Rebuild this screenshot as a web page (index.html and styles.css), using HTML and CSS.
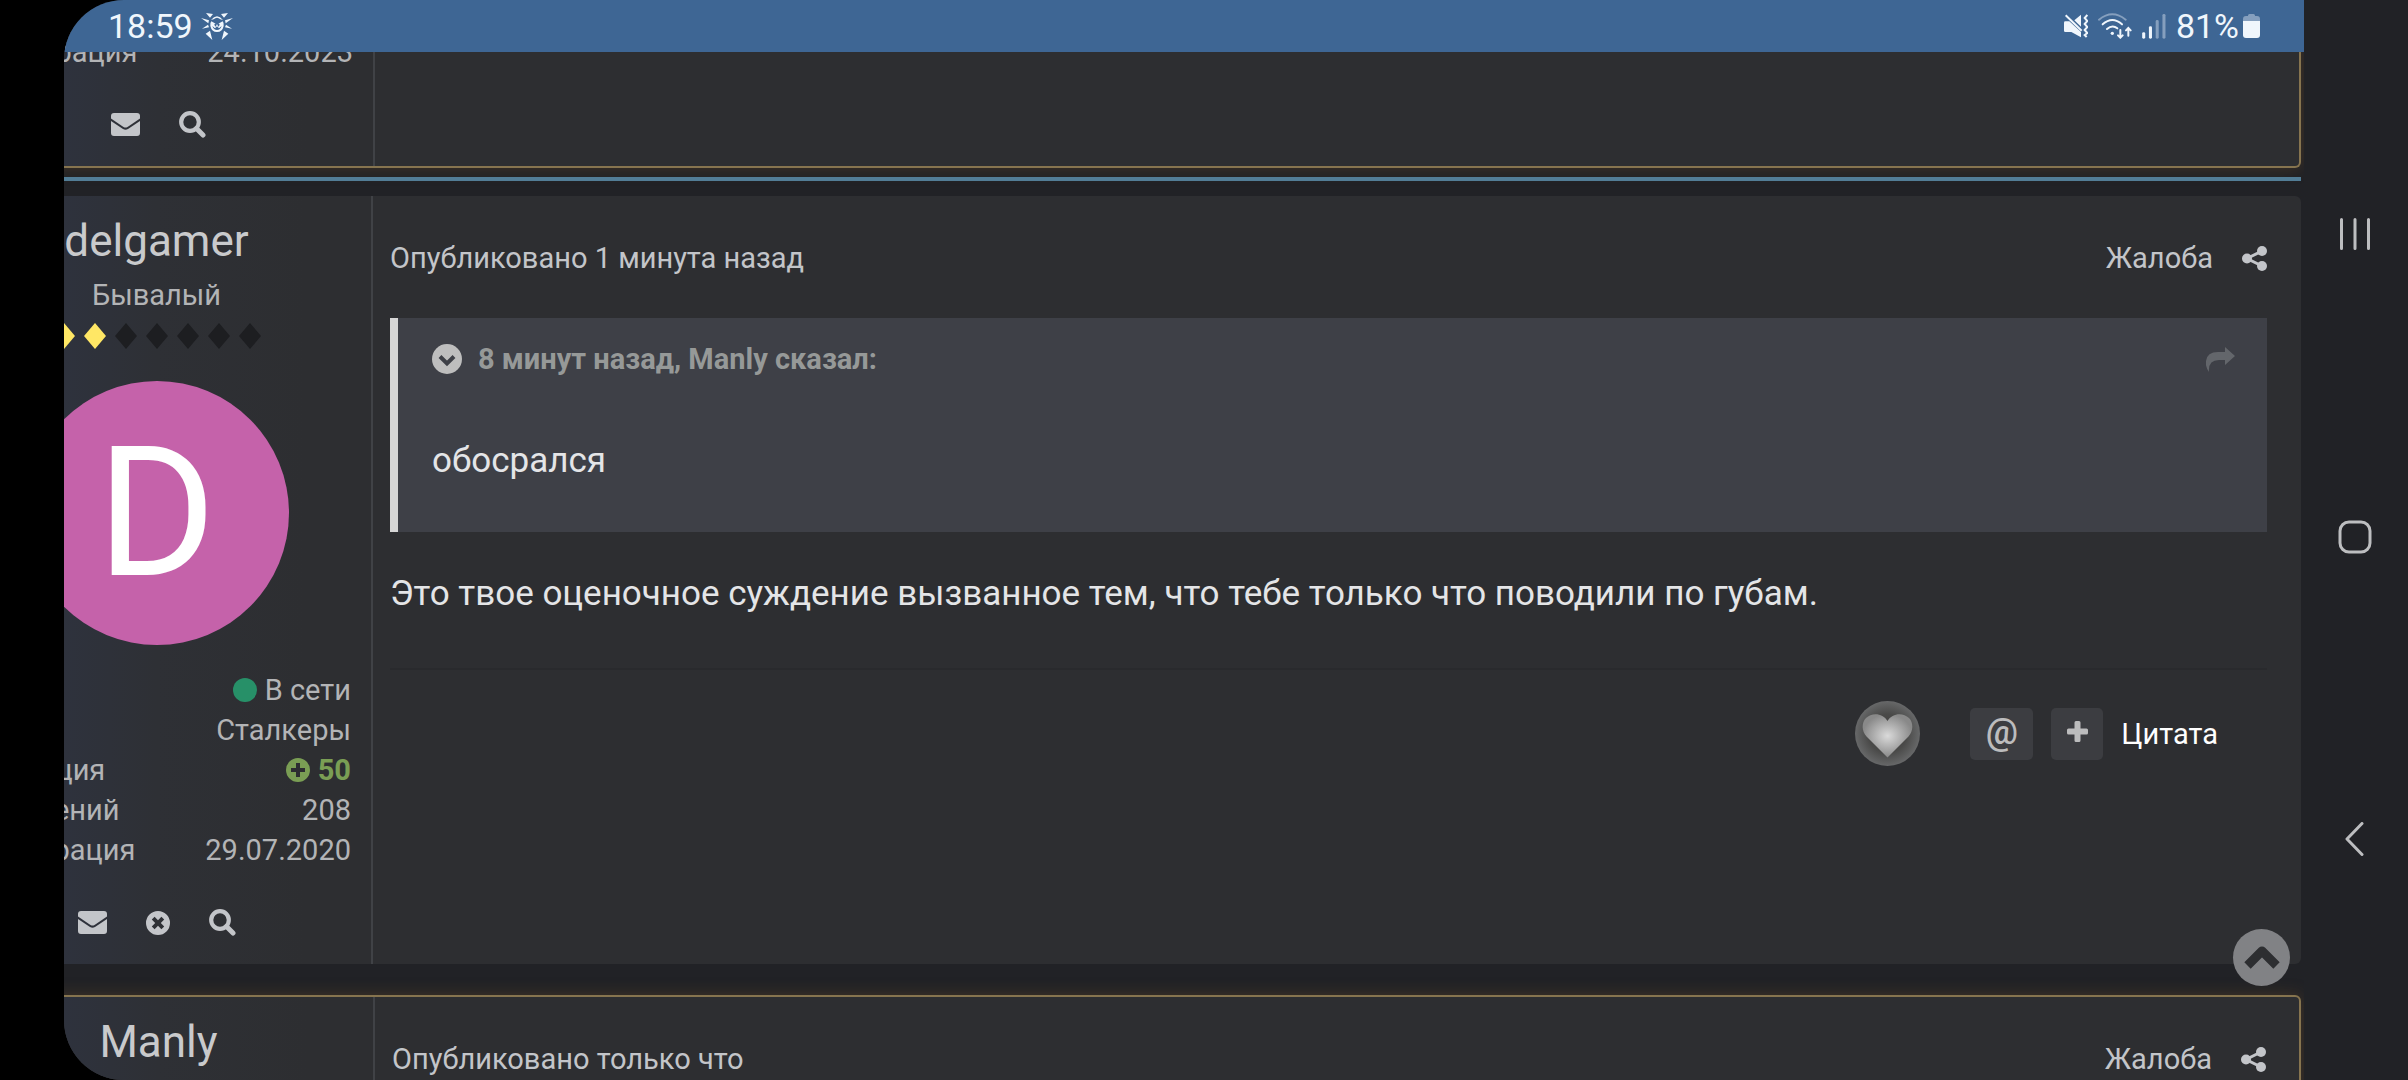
FILE: index.html
```html
<!DOCTYPE html>
<html lang="ru">
<head>
    <meta charset="UTF-8">
    <meta name="viewport" content="width=device-width, initial-scale=1.0">
    <title>Форум</title>
    <link rel="stylesheet" href="styles.css">
</head>
<body>
    <svg class="sprite" aria-hidden="true">
        <symbol id="i-mail" viewBox="0 0 29 23">
            <path d="M3 0h23a3 3 0 0 1 3 3v2.500L16.500 14a4 4 0 0 1-4 0L0 5.500V3a3 3 0 0 1 3-3z"/>
            <path d="M0 8l12 8a4.500 4.500 0 0 0 5 0l12-8v12a3 3 0 0 1-3 3H3a3 3 0 0 1-3-3z"/>
        </symbol>
        <symbol id="i-search" viewBox="0 0 27 27">
            <circle cx="11" cy="11" r="8.800" fill="none" stroke="currentColor" stroke-width="4.200"/>
            <path d="M17.500 17.500l6.500 6.500" fill="none" stroke="currentColor" stroke-width="5" stroke-linecap="round"/>
        </symbol>
        <symbol id="i-ban" viewBox="0 0 24 24">
            <path fill-rule="evenodd" d="M12 0a12 12 0 1 1 0 24a12 12 0 1 1 0-24zM8.600 5.800L5.800 8.600L9.200 12l-3.400 3.400l2.800 2.800L12 14.800l3.400 3.400l2.800-2.800L14.800 12l3.400-3.400l-2.800-2.800L12 9.200z"/>
        </symbol>
        <symbol id="i-share" viewBox="0 0 25 25">
            <path d="M20 5L5 12.500L20 20" fill="none" stroke="currentColor" stroke-width="3"/>
            <circle cx="5" cy="12.500" r="5"/><circle cx="20" cy="5" r="5"/><circle cx="20" cy="20" r="5"/>
        </symbol>
        <symbol id="i-diamond" viewBox="0 0 22 26">
            <path d="M11 0l11 13l-11 13L0 13z"/>
        </symbol>
    </svg>

    <div class="phone">
        <div class="screen">
            <header class="status-bar">
                <span class="clock">18:59</span>
                <svg class="spider" viewBox="0 0 96 84" aria-hidden="true">
                    <path d="M15 3L36 6L27 17zM0 18L24 25L22 34zM3 50L21 38L24 46zM14 65L27 56L34 84z"/>
                    <path d="M81 3L60 6L69 17zM96 18L72 25L74 34zM93 50L75 38L72 46zM82 65L69 56L62 84z"/>
                    <path d="M30 24Q48 2 66 24L58 22Q48 12 38 22z"/>
                    <path d="M31 28L44 35Q36 36 44 44L48 36L52 44Q60 36 52 35L65 28Q70 34 68 42Q64 60 48 60Q32 60 28 42Q26 34 31 28zM34 42Q38 54 48 54Q58 54 62 42L54 49L48 43L42 49z" fill-rule="evenodd"/>
                </svg>
                <div class="status-icons">
                    <svg class="mute" viewBox="0 0 72 72" aria-hidden="true">
                        <path d="M51 2v36L31 19zM4 22h12L51 54v16L22 54H4q-4 0-4-4V26q0-4 4-4z"/>
                        <path d="M5 4l48 46M70 3l-8 9l8 9l-8 9l8 9l-8 9l8 9l-8 6l6 6" fill="none" stroke="currentColor" stroke-width="6"/>
                    </svg>
                    <svg class="wifi" viewBox="0 0 102 78" aria-hidden="true">
                        <g fill="none" stroke="currentColor" stroke-width="6" stroke-linecap="round">
                            <path d="M3 20Q43-12 83 20" opacity=".4"/>
                            <path d="M14 34Q43 8 72 34M27 48Q43 34 58 46"/>
                            <path d="M67 51v22M60 67l7 7l7-7M91 68V46M84 52l7-7l7 7"/>
                        </g>
                        <circle cx="43" cy="61" r="5"/>
                    </svg>
                    <svg class="signal" viewBox="0 0 70 74" aria-hidden="true">
                        <rect x="0" y="54" width="9" height="19" rx="4"/>
                        <rect x="20" y="36" width="9" height="37" rx="4"/>
                        <rect x="40" y="18" width="9" height="55" rx="4" opacity=".4"/>
                        <rect x="60" y="0" width="9" height="73" rx="4" opacity=".4"/>
                    </svg>
                    <span class="charge">81%</span>
                    <svg class="battery" viewBox="0 0 17 24" aria-hidden="true">
                        <path d="M5 2V1.500Q5 0 6.500 0h4Q12 0 12 1.500V2h2q3 0 3 3v2H0V5q0-3 3-3z" opacity=".4"/>
                        <path d="M0 7h17v14q0 3-3 3H3q-3 0-3-3z"/>
                    </svg>
                </div>
            </header>

            <main class="feed">
                <article class="post post-marked post-first">
                    <aside class="author">
                        <dl class="stats">
                            <div><dt>Регистрация</dt><dd>24.10.2023</dd></div>
                        </dl>
                        <nav class="author-links">
                            <a href="#" aria-label="Сообщение"><svg class="icon-mail"><use href="#i-mail"/></svg></a>
                            <a href="#" aria-label="Найти"><svg class="icon-search"><use href="#i-search"/></svg></a>
                        </nav>
                    </aside>
                    <section class="body"></section>
                </article>

                <hr class="unread-line">

                <article class="post">
                    <aside class="author">
                        <h3 class="name"><a href="#">delgamer</a></h3>
                        <p class="rank">Бывалый</p>
                        <div class="pips">
                            <svg class="on"><use href="#i-diamond"/></svg>
                            <svg class="on"><use href="#i-diamond"/></svg>
                            <svg><use href="#i-diamond"/></svg>
                            <svg><use href="#i-diamond"/></svg>
                            <svg><use href="#i-diamond"/></svg>
                            <svg><use href="#i-diamond"/></svg>
                            <svg><use href="#i-diamond"/></svg>
                        </div>
                        <a class="avatar" href="#">D</a>
                        <dl class="stats">
                            <div><dd><span class="online"></span>В сети</dd></div>
                            <div><dd>Сталкеры</dd></div>
                            <div>
                                <dt>Репутация</dt>
                                <dd class="rep">
                                    <svg viewBox="0 0 24 24" aria-hidden="true"><path fill-rule="evenodd" d="M12 0a12 12 0 1 1 0 24a12 12 0 1 1 0-24zM10 5v5H5v4h5v5h4v-5h5v-4h-5V5z"/></svg>
                                    50
                                </dd>
                            </div>
                            <div><dt>Сообщений</dt><dd>208</dd></div>
                            <div><dt>Регистрация</dt><dd>29.07.2020</dd></div>
                        </dl>
                        <nav class="author-links">
                            <a href="#" aria-label="Сообщение"><svg class="icon-mail"><use href="#i-mail"/></svg></a>
                            <a href="#" aria-label="Игнорировать"><svg class="icon-ban"><use href="#i-ban"/></svg></a>
                            <a href="#" aria-label="Найти"><svg class="icon-search"><use href="#i-search"/></svg></a>
                        </nav>
                    </aside>
                    <section class="body">
                        <header class="meta">
                            <a href="#">Опубликовано 1 минута назад</a>
                            <a class="report" href="#">Жалоба</a>
                            <a href="#" aria-label="Поделиться"><svg class="icon-share"><use href="#i-share"/></svg></a>
                        </header>
                        <blockquote class="quote">
                            <div class="quote-head">
                                <button type="button" class="toggle" aria-label="Свернуть">
                                    <svg viewBox="0 0 30 30"><circle cx="15" cy="15" r="15"/><path d="M8 12.500l7 7l7-7" fill="none" stroke="#3e4047" stroke-width="4"/></svg>
                                </button>
                                <span>8 минут назад, Manly сказал:</span>
                                <a class="goto" href="#" aria-label="К сообщению">
                                    <svg viewBox="0 0 29 25"><path d="M19 0l10 9l-10 9v-5H13Q2 13 3 25Q-1 19 0 14Q1 5 12 5h7z"/></svg>
                                </a>
                            </div>
                            <p>обосрался</p>
                        </blockquote>
                        <p class="text">Это твое оценочное суждение вызванное тем, что тебе только что поводили по губам.</p>
                        <footer class="controls">
                            <button type="button" class="like" aria-label="Нравится">
                                <svg viewBox="0 0 65 65">
                                    <defs>
                                        <radialGradient id="disc"><stop offset="0" stop-color="#3c3a38"/><stop offset=".6" stop-color="#4a4a49"/><stop offset="1" stop-color="#676869"/></radialGradient>
                                        <radialGradient id="heart"><stop offset="0" stop-color="#dadada"/><stop offset="1" stop-color="#898989"/></radialGradient>
                                    </defs>
                                    <circle cx="32.500" cy="32.500" r="32.500" fill="url(#disc)"/>
                                    <path d="M32.500 56.500L11.500 35.500C6.500 30 6.500 21.500 11 17C17 11 28 12 32.500 20C37 12 48 11 54 17C58.500 21.500 58.500 30 53.500 35.500z" fill="url(#heart)"/>
                                </svg>
                            </button>
                            <button type="button" class="btn btn-at">@</button>
                            <button type="button" class="btn btn-plus" aria-label="Мультицитата">
                                <svg viewBox="0 0 21 21"><path d="M9 0h3q1.500 0 1.500 1.500v6h6q1.500 0 1.500 1.500v3q0 1.500-1.500 1.500h-6v6q0 1.500-1.500 1.500H9q-1.500 0-1.500-1.500v-6h-6Q0 13.500 0 12V9q0-1.500 1.500-1.500h6v-6Q7.500 0 9 0z"/></svg>
                            </button>
                            <a class="cite" href="#">Цитата</a>
                        </footer>
                    </section>
                </article>

                <article class="post post-marked post-next">
                    <aside class="author">
                        <h3 class="name"><a href="#">Manly</a></h3>
                    </aside>
                    <section class="body">
                        <header class="meta">
                            <a href="#">Опубликовано только что</a>
                            <a class="report" href="#">Жалоба</a>
                            <a href="#" aria-label="Поделиться"><svg class="icon-share"><use href="#i-share"/></svg></a>
                        </header>
                    </section>
                </article>
            </main>

            <a class="to-top" href="#" aria-label="Наверх">
                <svg viewBox="0 0 38 26"><path d="M4.500 20.500L19 6l14.500 14.500" fill="none" stroke="#2d2e31" stroke-width="9" stroke-linejoin="round"/></svg>
            </a>
        </div>

        <nav class="nav-bar">
            <button type="button" aria-label="Недавние">
                <svg viewBox="0 0 34 34"><path d="M3.500 2.500v29M17 2.500v29M30.500 2.500v29"/></svg>
            </button>
            <button type="button" aria-label="Домой">
                <svg viewBox="0 0 34 34"><rect x="2" y="2" width="30" height="30" rx="9"/></svg>
            </button>
            <button type="button" aria-label="Назад">
                <svg viewBox="0 0 34 34"><path d="M24 1.500L9 17l15 15.500"/></svg>
            </button>
        </nav>
    </div>
</body>
</html>
```
FILE: styles.css
```css
* {
    box-sizing: border-box;
}

body {
    margin: 0;
    background: #000;
    color: #c3c5c9;
    font-family: Roboto, "Liberation Sans", sans-serif;
    font-size: 29px;
    line-height: 40px;
}

h3, p, dl, dd, blockquote {
    margin: 0;
}

a {
    color: inherit;
    text-decoration: none;
}

button {
    padding: 0;
    border: none;
    background: none;
    color: inherit;
    font: inherit;
    cursor: pointer;
}

svg {
    display: block;
    fill: currentColor;
}

.sprite {
    display: none;
}

.phone {
    display: grid;
    grid-template-columns: minmax(0, 1fr) 104px;
    height: 100vh;
    padding-left: 64px;
    background: linear-gradient(to right, #000 50%, #212226 50%);
}

.screen {
    position: relative;
    overflow: hidden;
    display: flex;
    flex-direction: column;
    background: #212226;
    border-radius: 60px 0 0 60px;
}

/* Status bar */
.status-bar {
    position: relative;
    z-index: 1;
    flex: none;
    display: flex;
    align-items: center;
    height: 52px;
    padding: 0 44px;
    background: #3e6694;
    color: #f0f6fc;
    font-size: 34px;
}

.spider {
    width: 32px;
    height: 28px;
    margin-left: 8px;
}

.status-icons {
    display: flex;
    align-items: center;
    gap: 10px;
    margin-left: auto;
}

.mute {
    width: 24px;
    height: 24px;
}

.wifi {
    width: 34px;
    height: 26px;
}

.signal {
    width: 24px;
    height: 25px;
}

.battery {
    width: 17px;
    height: 24px;
    margin-left: -6px;
}

/* Posts */
.feed {
    margin: -20px 3px 0 -122px;
}

.post {
    display: grid;
    grid-template-columns: 431px minmax(0, 1fr);
    background: #2d2e31;
    border-radius: 6px;
}

.post-marked {
    border: 2px solid #86744f;
    box-shadow: 0 0 16px rgba(130, 85, 40, 0.35);
}

.post-first {
    border-top: none;
}

.unread-line {
    height: 4px;
    margin: 9px 0 15px;
    border: none;
    background: #527d96;
}

.author {
    display: flex;
    flex-direction: column;
    align-items: center;
    padding: 0 20px 28px;
    border-right: 2px solid #404246;
    background: linear-gradient(to right, #2e323d 28%, #2e3035 50%, #2d2e31 85%);
    color: #b3b4b6;
}

.name {
    margin-top: 17px;
    color: #c9cacc;
    font-size: 44px;
    font-weight: 400;
    line-height: 56px;
}

.rank {
    margin-top: 6px;
}

.pips {
    display: flex;
    gap: 9px;
    margin-top: 8px;
    color: #1d1e21;
}

.pips svg {
    width: 22px;
    height: 26px;
}

.pips .on {
    color: #ffe765;
}

.avatar {
    width: 264px;
    height: 264px;
    margin: 32px 0 25px;
    border-radius: 50%;
    background: #c562aa;
    color: #fff;
    font-size: 182px;
    line-height: 264px;
    text-align: center;
}

.stats {
    align-self: stretch;
}

.stats div {
    display: flex;
}

.stats dd {
    display: flex;
    align-items: center;
    gap: 8px;
    margin-left: auto;
}

.online {
    width: 24px;
    height: 24px;
    border-radius: 50%;
    background: #279068;
}

.stats .rep {
    color: #7a9e54;
    font-weight: 700;
}

.rep svg {
    width: 24px;
    height: 24px;
}

.author-links {
    display: flex;
    align-items: center;
    gap: 39px;
    margin-top: 39px;
    color: #c3c5c9;
}

.icon-mail {
    width: 29px;
    height: 23px;
}

.icon-ban {
    width: 24px;
    height: 24px;
}

.icon-search {
    width: 27px;
    height: 27px;
}

.icon-share {
    width: 25px;
    height: 25px;
}

.body {
    padding: 0 34px 0 17px;
}

.post-first .body,
.post-next .body {
    padding-right: 33px;
}

.meta {
    display: flex;
    align-items: center;
    margin-top: 42px;
}

.report {
    margin: 0 29px 0 auto;
}

/* Quote */
.quote {
    margin-top: 40px;
    padding: 21px 32px 51px 34px;
    border-left: 8px solid #d6d6d6;
    background: #3e4047;
    color: #e4e5e7;
    font-size: 35px;
}

.quote-head {
    display: flex;
    align-items: center;
    gap: 16px;
    margin-bottom: 62px;
    color: #969998;
    font-size: 29px;
    font-weight: 700;
}

.toggle {
    color: #bebebe;
}

.toggle svg {
    width: 30px;
    height: 30px;
}

.goto {
    margin-left: auto;
    color: #63666b;
}

.goto svg {
    width: 29px;
    height: 25px;
}

.text {
    margin-top: 42px;
    padding-bottom: 54px;
    border-bottom: 2px solid #292a2d;
    color: #e4e5e7;
    font-size: 35px;
}

.controls {
    display: flex;
    align-items: center;
    justify-content: flex-end;
    margin-top: 31px;
    padding-right: 49px;
}

.like {
    width: 65px;
    height: 65px;
    margin-right: 50px;
}

.btn {
    display: flex;
    align-items: center;
    justify-content: center;
    height: 52px;
    padding-bottom: 4px;
    margin-right: 18px;
    border-radius: 5px;
    background: #3c3d41;
    color: #bcbcbd;
}

.btn-at {
    width: 63px;
    font-size: 36px;
    font-weight: 500;
}

.btn-plus {
    width: 52px;
}

.btn-plus svg {
    width: 21px;
    height: 21px;
}

.cite {
    color: #fff;
}

.post-next {
    margin-top: 31px;
}

/* Scroll to top */
.to-top {
    position: absolute;
    right: 14px;
    bottom: 94px;
    display: flex;
    align-items: center;
    justify-content: center;
    width: 57px;
    height: 57px;
    border-radius: 50%;
    background: #818285;
}

.to-top svg {
    width: 38px;
    height: 26px;
}

/* System buttons */
.nav-bar {
    display: flex;
    flex-direction: column;
    align-items: center;
    justify-content: space-between;
    padding: 217px 3px 224px 0;
    background: #212226;
}

.nav-bar svg {
    width: 34px;
    height: 34px;
    fill: none;
    stroke: #bdbec0;
    stroke-width: 3;
    stroke-linecap: round;
    stroke-linejoin: round;
}
```
